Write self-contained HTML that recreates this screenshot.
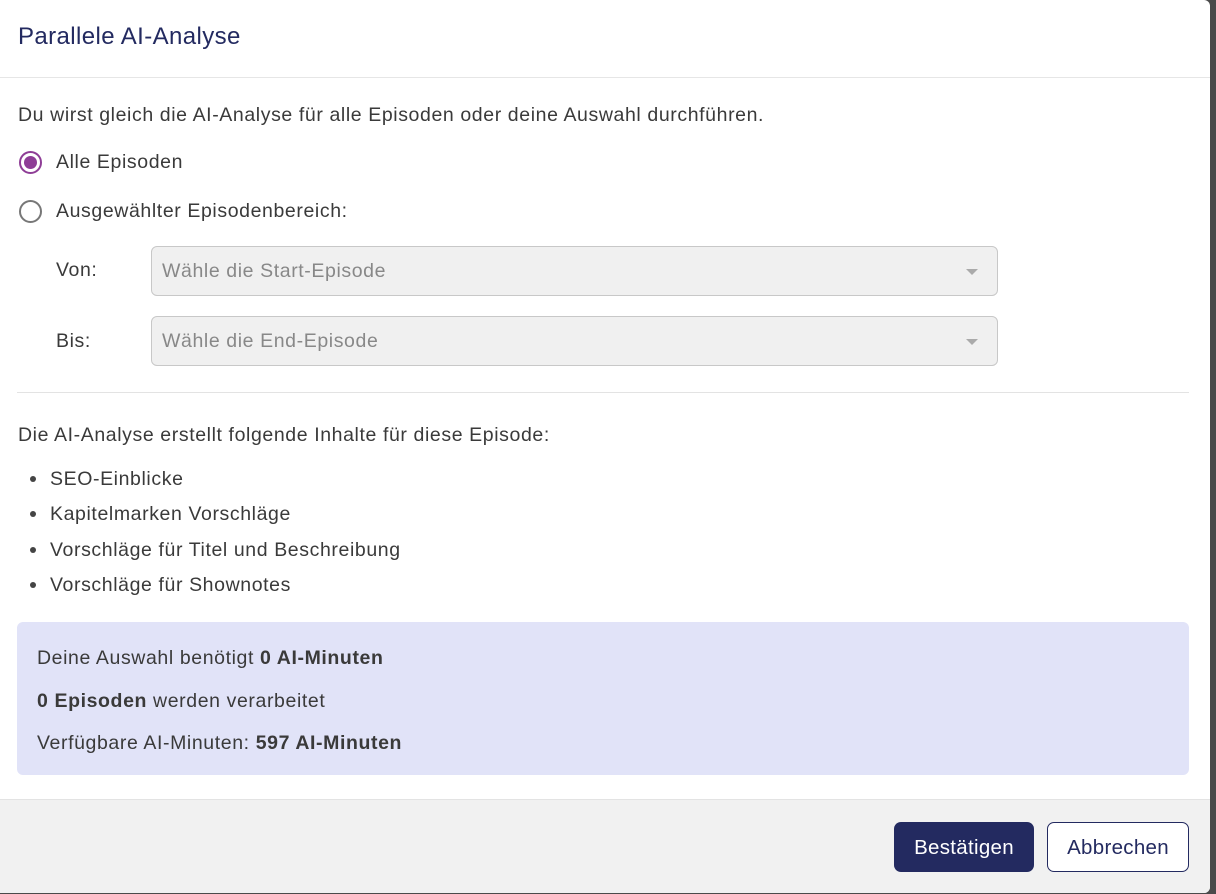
<!DOCTYPE html>
<html><head><meta charset="utf-8"><style>
*{box-sizing:border-box;margin:0;padding:0}
body{width:1216px;height:894px;background:#4a4a4a;font-family:"Liberation Sans",Arial,sans-serif;color:#3a3a3a;position:relative;overflow:hidden}
.m{position:absolute;left:0;top:0;width:1210px;height:893px;background:#fff;border-radius:0 6px 6px 0;overflow:hidden}
.t{position:absolute;left:18px;top:23px;font-size:24px;letter-spacing:0.4px;color:#232a60}
.hb{position:absolute;left:0;right:0;top:77px;border-top:1px solid #e6e6e6}
.p{position:absolute;font-size:19.5px;letter-spacing:0.6px;line-height:22px;white-space:nowrap}
.r{position:absolute;left:19px;width:23px;height:23px;border-radius:50%;border:2px solid #777;background:#fff}
.r.on{border-color:#8e3d96}
.r.on::after{content:"";position:absolute;left:3px;top:3px;width:13px;height:13px;border-radius:50%;background:#8e3d96}
.s{position:absolute;left:151px;width:847px;height:50px;background:#f0f0f0;border:1px solid #c8c8c8;border-radius:6px;font-size:19.5px;letter-spacing:0.6px;color:#888;padding:13px 0 0 10px}
.s::after{content:"";position:absolute;right:19px;top:22px;border-left:6px solid transparent;border-right:6px solid transparent;border-top:6px solid #aaa}
.dv{position:absolute;left:17px;width:1172px;top:392px;border-top:1px solid #e3e3e3}
.dot{position:absolute;left:30px;width:6px;height:6px;border-radius:50%;background:#444}
.box{position:absolute;left:17px;top:622px;width:1172px;height:153px;background:#e1e3f8;border-radius:6px}
.ft{position:absolute;left:0;right:0;top:799px;bottom:0;background:#f1f1f1;border-top:1px solid #e3e3e3}
.b{position:absolute;top:822px;height:50px;border-radius:7px;font-size:20.5px;letter-spacing:0.3px;text-align:center;line-height:52px}
b{font-weight:bold}
</style></head><body>
<div class="m">
<div class="t">Parallele AI-Analyse</div>
<div class="hb"></div>
<div class="p" style="left:18px;top:104px">Du wirst gleich die AI-Analyse für alle Episoden oder deine Auswahl durchführen.</div>
<div class="r on" style="top:151px"></div>
<div class="p" style="left:56px;top:151px">Alle Episoden</div>
<div class="r" style="top:200px"></div>
<div class="p" style="left:56px;top:200px">Ausgewählter Episodenbereich:</div>
<div class="p" style="left:56px;top:259px">Von:</div>
<div class="s" style="top:246px">Wähle die Start-Episode</div>
<div class="p" style="left:56px;top:330px">Bis:</div>
<div class="s" style="top:316px">Wähle die End-Episode</div>
<div class="dv"></div>
<div class="p" style="left:18px;top:424px">Die AI-Analyse erstellt folgende Inhalte für diese Episode:</div>
<div class="dot" style="top:476px"></div><div class="p" style="left:50px;top:468px">SEO-Einblicke</div>
<div class="dot" style="top:511px"></div><div class="p" style="left:50px;top:503px">Kapitelmarken Vorschläge</div>
<div class="dot" style="top:547px"></div><div class="p" style="left:50px;top:539px">Vorschläge für Titel und Beschreibung</div>
<div class="dot" style="top:582px"></div><div class="p" style="left:50px;top:574px">Vorschläge für Shownotes</div>
<div class="box"></div>
<div class="p" style="left:37px;top:647px">Deine Auswahl benötigt <b>0 AI-Minuten</b></div>
<div class="p" style="left:37px;top:690px"><b>0 Episoden</b> werden verarbeitet</div>
<div class="p" style="left:37px;top:732px">Verfügbare AI-Minuten: <b>597 AI-Minuten</b></div>
<div class="ft"></div>
<div class="b" style="left:894px;width:140px;background:#232a60;color:#fff">Bestätigen</div>
<div class="b" style="left:1047px;width:142px;background:#fff;border:1px solid #232a60;color:#232a60;line-height:50px">Abbrechen</div>
</div>
</body></html>
